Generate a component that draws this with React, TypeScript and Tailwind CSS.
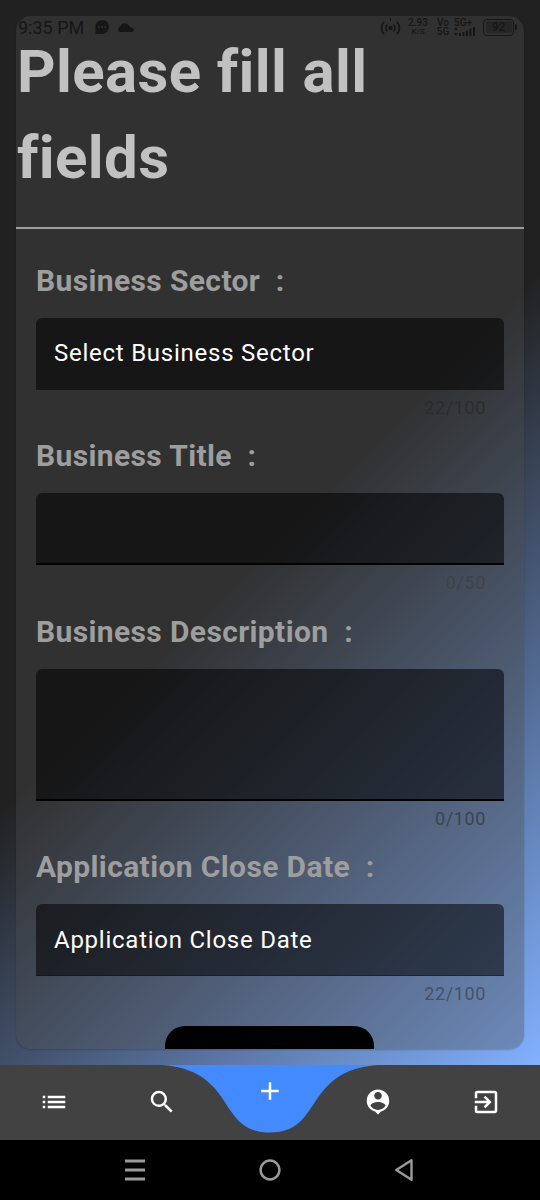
import { MdAdd, MdExitToApp, MdList, MdSearch } from 'react-icons/md';

function StatusBar() {
  return (
    <div className="absolute inset-x-0 top-0 flex h-[54px] items-center justify-between pr-[23px] pl-[18px] text-[#161616]">
      <div className="flex items-center">
        <span className="w-[66px] pt-px text-[18px] leading-none whitespace-nowrap">9:35 PM</span>
        <svg className="ml-[11px]" width="14" height="14" viewBox="0 0 14 14">
          <path d="M7 0a7 7 0 1 1 0 14H.5V8A7 7 0 0 1 7 0Z" fill="#161616" />
          <circle cx="3.8" cy="7" r="1" fill="#303030" />
          <circle cx="7" cy="7" r="1" fill="#303030" />
          <circle cx="10.2" cy="7" r="1" fill="#303030" />
        </svg>
        <svg className="ml-[9px]" width="16" height="9" viewBox="0 0 16 9">
          <path d="M2 9a2.800 2.800 0 0 1 .2-5.400A4.800 4.800 0 0 1 11 2.800a3 3 0 0 1 1.600 1.800A2.400 2.400 0 0 1 14.500 9Z" fill="#161616" />
        </svg>
      </div>
      <div className="flex items-center">
        <svg width="21" height="18" viewBox="0 0 21 18" fill="none" stroke="#161616" strokeWidth="1.700">
          <circle cx="10.500" cy="10" r="2.200" fill="#161616" stroke="none" />
          <path d="M7.400 6.500a5 5 0 0 0 0 7M13.600 6.500a5 5 0 0 1 0 7M4 3.800a9 9 0 0 0 0 12.400M17 3.800a9 9 0 0 1 0 12.400" />
          <path d="M10.500 0v3" strokeWidth="1" />
        </svg>
        <div className="ml-[6px] flex w-[22px] flex-col items-center text-[10px] leading-[9px] font-medium">
          <span>2.93</span>
          <span className="text-[8px]">K/S</span>
        </div>
        <div className="ml-[7px] flex w-[14px] flex-col items-center text-[10px] leading-[9px] font-medium">
          <span>Vo</span>
          <span>5G</span>
        </div>
        <div className="ml-[4px] flex w-[22px] flex-col text-[10px] leading-[9px] font-medium">
          <span>5G+</span>
          <svg width="22" height="9" viewBox="0 0 22 9" fill="#161616">
            <path d="M2 0l2 3H0ZM2 9L0 6h4ZM5 6h2v3H5ZM8.500 5h2v4h-2ZM12 3.500h2V9h-2ZM15.500 1.500h2V9h-2ZM19 0h2v9h-2Z" />
          </svg>
        </div>
        <div className="ml-[7px] flex h-[17px] w-[31px] items-center justify-center rounded-[4px] border-[1.500px] border-[#161616] p-[1.500px]">
          <span className="flex h-full w-full items-center justify-center rounded-[2px] bg-[#262626] text-[12px] leading-none font-medium">92</span>
        </div>
        <span className="ml-[1px] h-[6px] w-[2px] rounded-r bg-[#161616]" />
      </div>
    </div>
  );
}

type FieldProps = {
  label: string;
  value?: string;
  counter: string;
  className: string;
  boxClass: string;
  counterClass: string;
};

function Field({ label, value, counter, className, boxClass, counterClass }: FieldProps) {
  return (
    <div className={`flex flex-col ${className}`}>
      <label className="h-[54px] text-[30px] leading-[34px] font-bold tracking-[0.375px] whitespace-pre text-[#9e9e9e]">
        {label}
        {'  :'}
      </label>
      <div className={`flex items-center rounded-t-[6px] bg-black/54 px-[18px] text-[24px] tracking-[0.75px] text-white ${boxClass}`}>
        {value}
      </div>
      <span className={`mt-[7px] pr-[18px] text-right text-[18px] leading-[22px] tracking-[0.6px] ${counterClass}`}>
        {counter}
      </span>
    </div>
  );
}

function BottomBar() {
  return (
    <nav className="relative h-[75px] shrink-0 bg-[#424242] text-white">
      <svg className="absolute inset-0" width="540" height="75" viewBox="0 0 540 75">
        <path d="M162 0C237.600 5.600 216 67.500 270 67.500S302.400 5.600 378 0Z" fill="#448aff" />
      </svg>
      <div className="relative grid h-[74px] grid-cols-5 place-items-center">
        <MdList size={30} />
        <MdSearch size={30} />
        <MdAdd size={30} className="mb-[22px]" />
        <svg width="30" height="30" viewBox="0 0 24 24" fill="currentColor">
          <path d="M12 2c-4.970 0-9 4.030-9 9 0 4.170 2.840 7.670 6.690 8.690L12 22l2.310-2.310C18.160 18.670 21 15.170 21 11c0-4.970-4.030-9-9-9zm0 2c1.660 0 3 1.340 3 3s-1.340 3-3 3-3-1.340-3-3 1.340-3 3-3zm0 14.300c-2.500 0-4.710-1.280-6-3.220.03-1.990 4-3.080 6-3.080 1.990 0 5.970 1.090 6 3.080-1.290 1.940-3.500 3.220-6 3.220z" />
        </svg>
        <MdExitToApp size={30} />
      </div>
    </nav>
  );
}

function SystemBar() {
  return (
    <div className="flex h-[60px] shrink-0 items-center justify-between bg-black px-[124px]">
      <svg width="22" height="24" viewBox="0 0 22 24" stroke="#9a9a9a" strokeWidth="2.800">
        <path d="M1 3h20M1 12h20M1 21h20" />
      </svg>
      <svg width="22" height="24" viewBox="0 0 22 24" fill="none" stroke="#9a9a9a" strokeWidth="2.500">
        <circle cx="11" cy="12" r="9.400" />
      </svg>
      <svg width="22" height="24" viewBox="0 0 22 24" fill="none" stroke="#9a9a9a" strokeWidth="2.400" strokeLinejoin="round">
        <path d="M17.500 2.200v19.600L2.300 12Z" />
      </svg>
    </div>
  );
}

export default function App() {
  return (
    <div className="relative flex h-[1200px] w-[540px] flex-col overflow-hidden bg-black font-[Roboto,sans-serif]">
      <main className="h-[1065px] shrink-0 bg-[linear-gradient(135deg,#212121_0%,#212121_50.5%,#82b1ff_100%)] pt-[16px] pr-[16.500px] pl-[16.400px]">
        <div className="flex h-[1032.500px] flex-col overflow-hidden rounded-[15px] bg-[#4d4d4d]/36 shadow-[0_1px_2px_rgba(0,0,0,0.2)]">
          <h1 className="h-[211px] shrink-0 pt-[13px] pl-[0.500px] text-[60px] leading-[85.500px] font-bold tracking-[0.375px] text-[#c1c1c1]">
            Please fill all
            <br />
            fields
          </h1>
          <hr className="h-[2px] shrink-0 border-0 bg-[#9e9e9e]" />
          <form className="flex flex-col px-[19.600px] pt-[34.900px]">
            <Field
              label="Business Sector"
              value="Select Business Sector"
              counter="22/100"
              className="h-[175.500px]"
              boxClass="h-[72px] pb-px"
              counterClass="text-[#2b2b2c]"
            />
            <Field
              label="Business Title"
              counter="0/50"
              className="h-[175.500px]"
              boxClass="h-[72px] border-b-2 border-black"
              counterClass="text-[#404147]"
            />
            <Field
              label="Business Description"
              counter="0/100"
              className="h-[235.500px]"
              boxClass="h-[132px] border-b-2 border-black"
              counterClass="text-[#3b4350]"
            />
            <Field
              label="Application Close Date"
              value="Application Close Date"
              counter="22/100"
              className="h-[175.500px]"
              boxClass="h-[72px] border-b border-black/30"
              counterClass="text-[#44516a]"
            />
            <button type="button" className="h-[72px] w-[209px] shrink-0 self-center rounded-[20px] bg-black" />
          </form>
        </div>
      </main>
      <BottomBar />
      <SystemBar />
      <StatusBar />
    </div>
  );
}
